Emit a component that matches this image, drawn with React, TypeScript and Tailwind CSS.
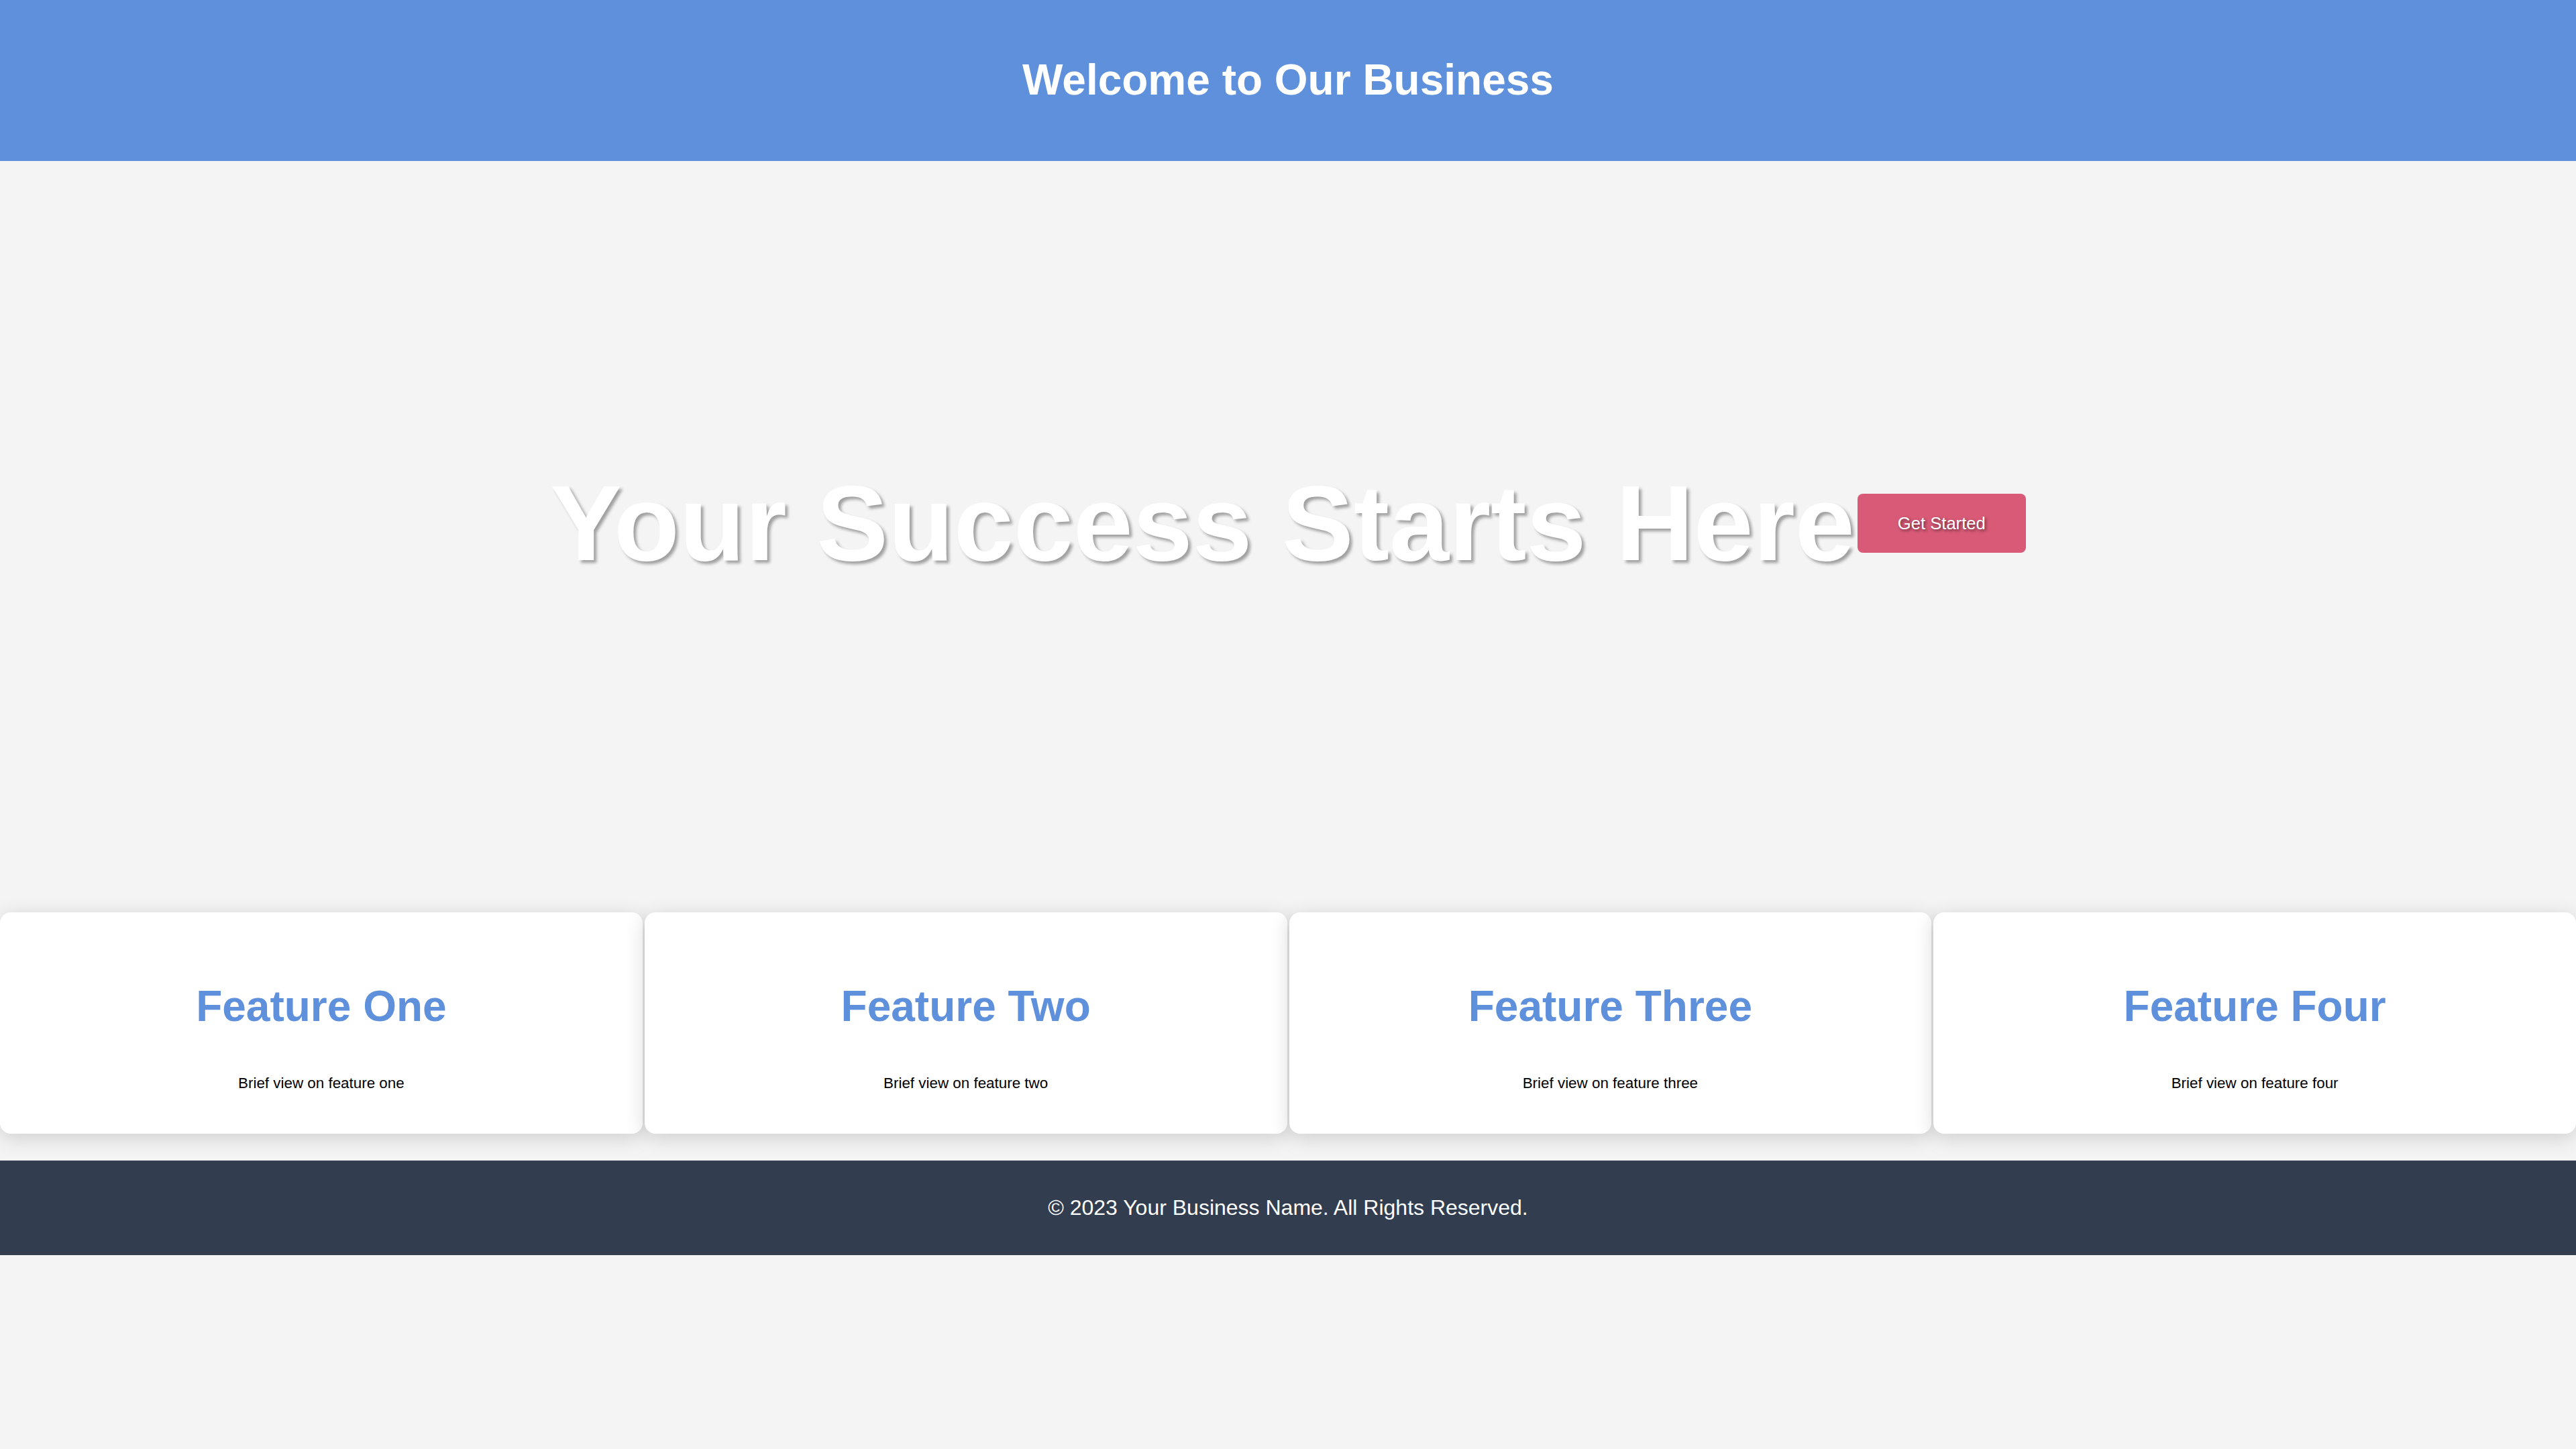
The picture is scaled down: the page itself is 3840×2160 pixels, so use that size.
import React from 'react';

const features = [
  { title: 'Feature One', text: 'Brief view on feature one' },
  { title: 'Feature Two', text: 'Brief view on feature two' },
  { title: 'Feature Three', text: 'Brief view on feature three' },
  { title: 'Feature Four', text: 'Brief view on feature four' },
];

export default function App() {
  return (
    <div className="min-h-screen bg-[#f4f4f4] font-['Liberation_Sans',Arial,sans-serif]">
      <header className="h-[240px] bg-[#5f90dc] flex items-center justify-center">
        <h1 className="text-[64px] font-bold text-white leading-[1.15]">Welcome to Our Business</h1>
      </header>

      {/* Hero */}
      <section className="h-[1080px] flex items-center justify-center gap-1">
        <h2 className="text-[160px] font-bold text-white leading-[1.15] [text-shadow:4px_4px_4px_rgba(0,0,0,0.35)]">
          Your Success Starts Here
        </h2>
        <button className="w-[251px] h-[88px] rounded-lg bg-[#d85a77] text-white text-[25.6px] [text-shadow:2px_2px_4px_rgba(0,0,0,0.55)]">
          Get Started
        </button>
      </section>

      <section className="py-10 grid grid-cols-4 gap-[3px]">
        {features.map((f) => (
          <div key={f.title} className="bg-white rounded-2xl p-10 text-center shadow-[0_6px_30px_rgba(0,0,0,0.16)]">
            <h3 className="my-16 text-[64px] font-bold text-[#5f90dc] leading-[1.15]">{f.title}</h3>
            <p className="my-[22.4px] text-[22.4px] text-black leading-[1.15]">{f.text}</p>
          </div>
        ))}
      </section>

      <footer className="bg-[#323e50] h-[141px] flex items-center justify-center">
        <p className="text-[32px] text-white leading-[1.15]">© 2023 Your Business Name. All Rights Reserved.</p>
      </footer>
    </div>
  );
}
